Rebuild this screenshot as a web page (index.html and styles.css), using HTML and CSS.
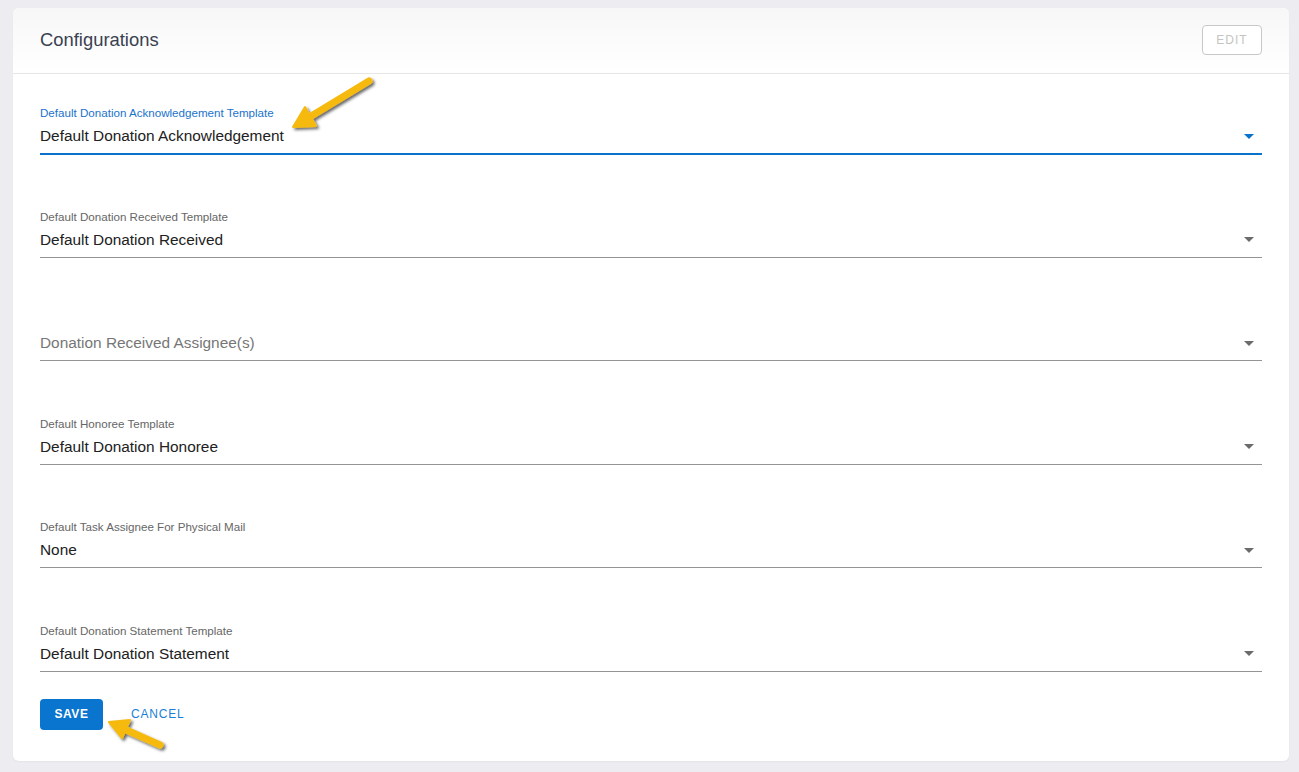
FILE: index.html
```html
<!DOCTYPE html>
<html lang="en">
<head>
  <meta charset="UTF-8">
  <meta name="viewport" content="width=device-width, initial-scale=1.0">
  <title>Configurations</title>
  <link rel="stylesheet" href="styles.css">
</head>
<body>
  <div class="card">
    <header class="card-header">
      <h1>Configurations</h1>
      <button class="btn-edit" disabled>EDIT</button>
    </header>

    <form class="card-body">
      <div class="field focused">
        <label>Default Donation Acknowledgement Template</label>
        <div class="select">
          <span class="value">Default Donation Acknowledgement</span>
          <span class="caret"></span>
        </div>
      </div>

      <div class="field">
        <label>Default Donation Received Template</label>
        <div class="select">
          <span class="value">Default Donation Received</span>
          <span class="caret"></span>
        </div>
      </div>

      <div class="field">
        <label>&nbsp;</label>
        <div class="select">
          <span class="value placeholder">Donation Received Assignee(s)</span>
          <span class="caret"></span>
        </div>
      </div>

      <div class="field">
        <label>Default Honoree Template</label>
        <div class="select">
          <span class="value">Default Donation Honoree</span>
          <span class="caret"></span>
        </div>
      </div>

      <div class="field">
        <label>Default Task Assignee For Physical Mail</label>
        <div class="select">
          <span class="value">None</span>
          <span class="caret"></span>
        </div>
      </div>

      <div class="field">
        <label>Default Donation Statement Template</label>
        <div class="select">
          <span class="value">Default Donation Statement</span>
          <span class="caret"></span>
        </div>
      </div>

      <div class="actions">
        <button type="button" class="btn-save">SAVE</button>
        <button type="button" class="btn-cancel">CANCEL</button>
      </div>
    </form>
  </div>

  <!-- annotation arrows -->
  <svg class="annotations" width="1299" height="772" viewBox="0 0 1299 772">
    <defs>
      <filter id="shadow" x="-20%" y="-20%" width="140%" height="140%">
        <feDropShadow dx="2" dy="2" stdDeviation="1.5" flood-color="#000" flood-opacity="0.6"/>
      </filter>
    </defs>
    <g filter="url(#shadow)" fill="#f6b90a" stroke="#f6b90a" stroke-linejoin="round">
      <line x1="369" y1="81" x2="308" y2="118" stroke-width="7" stroke-linecap="round"/>
      <polygon points="293,127 316,126 305,107" stroke-width="2"/>
      <line x1="160" y1="745" x2="124" y2="729" stroke-width="7" stroke-linecap="round"/>
      <polygon points="109,722 130,720 122,738" stroke-width="2"/>
    </g>
  </svg>
</body>
</html>
```

FILE: styles.css
```css
body {
  margin: 0;
  padding: 8px 10px 10px 13px;
  background: #ececf1;
  font-family: 'Liberation Sans', Arial, sans-serif;
  color: #212121;
}

.card {
  background: #fff;
  border-radius: 6px;
  box-shadow: 0 1px 2px rgba(0, 0, 0, 0.04);
}

.card-header {
  display: flex;
  align-items: center;
  justify-content: space-between;
  height: 65px;
  padding: 0 27px;
  border-bottom: 1px solid #e6e6e8;
  border-radius: 6px 6px 0 0;
  background: linear-gradient(#f7f7f8, #fff);
}

.card-header h1 {
  margin: -1px 0 0;
  font-size: 18.4px;
  font-weight: normal;
  color: #3a4151;
}

.btn-edit {
  width: 60px;
  height: 30px;
  margin-top: -1px;
  background: #fff;
  border: 1px solid #c8c8c8;
  border-radius: 4px;
  font-family: inherit;
  font-size: 12px;
  letter-spacing: 1px;
  color: #c4c4c4;
}

.card-body {
  padding: 32px 27px 31px;
}

.field {
  margin-bottom: 55.6px;
}

.field label {
  display: block;
  font-size: 11.6px;
  line-height: 14px;
  color: #666;
}

.select {
  display: flex;
  align-items: center;
  justify-content: space-between;
  height: 18px;
  margin-top: 7px;
  padding-bottom: 8px;
  border-bottom: 1px solid #949494;
}

.value {
  font-size: 15.4px;
  line-height: 18px;
}

.value.placeholder {
  color: #767676;
}

.caret {
  width: 0;
  height: 0;
  margin-right: 8px;
  border-left: 5px solid transparent;
  border-right: 5px solid transparent;
  border-top: 5px solid #6b6b6b;
}

.field.focused {
  margin-bottom: 54.6px;
}

.field.focused label {
  color: #1a73cc;
}

.field.focused .select {
  border-bottom: 2px solid #0a73c9;
}

.field.focused .caret {
  border-top-color: #0a73c9;
}

.actions {
  display: flex;
  align-items: center;
  gap: 20px;
  margin-top: -29px;
}

.btn-save {
  width: 63px;
  height: 31px;
  background: #0a75cf;
  border: none;
  border-radius: 4px;
  font-family: inherit;
  font-size: 12px;
  font-weight: bold;
  letter-spacing: 0.5px;
  color: #fff;
}

.btn-cancel {
  padding: 0 8px;
  height: 31px;
  background: none;
  border: none;
  font-family: inherit;
  font-size: 12px;
  letter-spacing: 0.8px;
  color: #1a7fd6;
}

.annotations {
  position: absolute;
  top: 0;
  left: 0;
  pointer-events: none;
}
```
